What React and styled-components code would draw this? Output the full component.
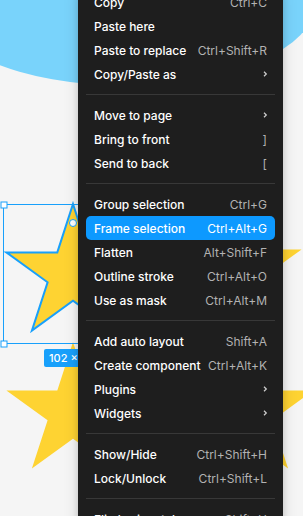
import React from 'react';
import styled, { createGlobalStyle } from 'styled-components';

const GlobalStyle = createGlobalStyle`
  html, body { margin: 0; padding: 0; overflow: hidden; }
  body { font-family: Inter, "Noto Sans", sans-serif; }
`;

const BLUE = '#18a0fb';
const YELLOW = '#fed332';

// menu data, null = separator
const ITEMS = [
  { label: 'Copy', keys: 'Ctrl+C' },
  { label: 'Paste here' },
  { label: 'Paste to replace', keys: 'Ctrl+Shift+R' },
  { label: 'Copy/Paste as', sub: true },
  null,
  { label: 'Move to page', sub: true },
  { label: 'Bring to front', keys: ']' },
  { label: 'Send to back', keys: '[' },
  null,
  { label: 'Group selection', keys: 'Ctrl+G' },
  { label: 'Frame selection', keys: 'Ctrl+Alt+G', active: true },
  { label: 'Flatten', keys: 'Alt+Shift+F' },
  { label: 'Outline stroke', keys: 'Ctrl+Alt+O' },
  { label: 'Use as mask', keys: 'Ctrl+Alt+M' },
  null,
  { label: 'Add auto layout', keys: 'Shift+A' },
  { label: 'Create component', keys: 'Ctrl+Alt+K' },
  { label: 'Plugins', sub: true },
  { label: 'Widgets', sub: true },
  null,
  { label: 'Show/Hide', keys: 'Ctrl+Shift+H' },
  { label: 'Lock/Unlock', keys: 'Ctrl+Shift+L' },
  null,
  { label: 'Flip horizontal', keys: 'Shift+H' },
];

function star(cx, cy, R, r) {
  const pts = [];
  for (let i = 0; i < 10; i++) {
    const rad = i % 2 === 0 ? R : r;
    const a = (Math.PI / 5) * i;
    pts.push((cx + rad * Math.sin(a)).toFixed(1) + ',' + (cy - rad * Math.cos(a)).toFixed(1));
  }
  return pts.join(' ');
}

const Canvas = styled.div`
  position: relative;
  width: 303px;
  height: 516px;
  overflow: hidden;
  background: #f5f5f5;
`;

const Drawing = styled.svg`
  display: block;
`;

const SizeBadge = styled.div`
  position: absolute;
  left: 44px;
  top: 349px;
  height: 18px;
  padding: 0 5px;
  border-radius: 2px;
  background: ${BLUE};
  color: #fff;
  font-size: 11px;
  font-weight: 500;
  line-height: 18px;
  white-space: nowrap;
`;

const Menu = styled.div`
  position: absolute;
  left: 78px;
  top: -18px;
  width: 205px;
  padding: 8px 0;
  background: #1e1e1e;
  border-radius: 13px;
  box-shadow: 0 2px 6px rgba(0, 0, 0, 0.15), 0 4px 16px rgba(0, 0, 0, 0.12);
  display: flex;
  flex-direction: column;
`;

const Row = styled.div`
  display: flex;
  align-items: center;
  justify-content: space-between;
  height: 24px;
  margin: 0 8px;
  padding: 0 8px;
  border-radius: 5px;
  background: ${p => (p.$active ? '#0d99ff' : 'transparent')};
  font-size: 12px;
  font-weight: 500;
  white-space: nowrap;
`;

const Label = styled.span`
  color: #ffffff;
`;

const Keys = styled.span`
  color: ${p => (p.$active ? '#ffffff' : '#b2b2b2')};
  font-weight: 400;
`;

const Sep = styled.div`
  height: 1px;
  margin: 8px 8px;
  background: #383838;
`;

const Chevron = () => (
  <svg width="8" height="8" viewBox="0 0 8 8" style={{ marginRight: -2 }}>
    <path d="M3 1.8 L5.3 4 L3 6.2" fill="none" stroke="#d0d0d0" strokeWidth="1.2" />
  </svg>
);

export default function App() {
  return (
    <Canvas>
      <GlobalStyle />
      <Drawing width="303" height="516" viewBox="0 0 303 516">
        <ellipse cx="125" cy="3.5" rx="190" ry="82" fill="#79d3fb" />
        <polygon points={star(73, 412, 70, 26.7)} fill={YELLOW} />
        <polygon points={star(247, 412, 70, 26.7)} fill={YELLOW} />
        <polygon points={star(235, 271, 70, 26.7)} fill={YELLOW} />
        <polygon points={star(73, 274, 70, 26.7)} fill={YELLOW} stroke={BLUE} strokeWidth="2" strokeLinejoin="miter" />
        <rect x="3.5" y="204.5" width="102" height="139" fill="none" stroke={BLUE} strokeWidth="1" />
        <rect x="1" y="202" width="6" height="6" fill="#fff" stroke={BLUE} strokeWidth="1" />
        <rect x="1" y="341" width="6" height="6" fill="#fff" stroke={BLUE} strokeWidth="1" />
        <circle cx="73" cy="223" r="3.5" fill="#fff" stroke={BLUE} strokeWidth="1" />
      </Drawing>
      <SizeBadge>102 × 139</SizeBadge>
      <Menu>
        {ITEMS.map((it, i) =>
          it === null ? (
            <Sep key={i} />
          ) : (
            <Row key={i} $active={it.active}>
              <Label>{it.label}</Label>
              {it.keys && <Keys $active={it.active}>{it.keys}</Keys>}
              {it.sub && <Chevron />}
            </Row>
          )
        )}
      </Menu>
    </Canvas>
  );
}
